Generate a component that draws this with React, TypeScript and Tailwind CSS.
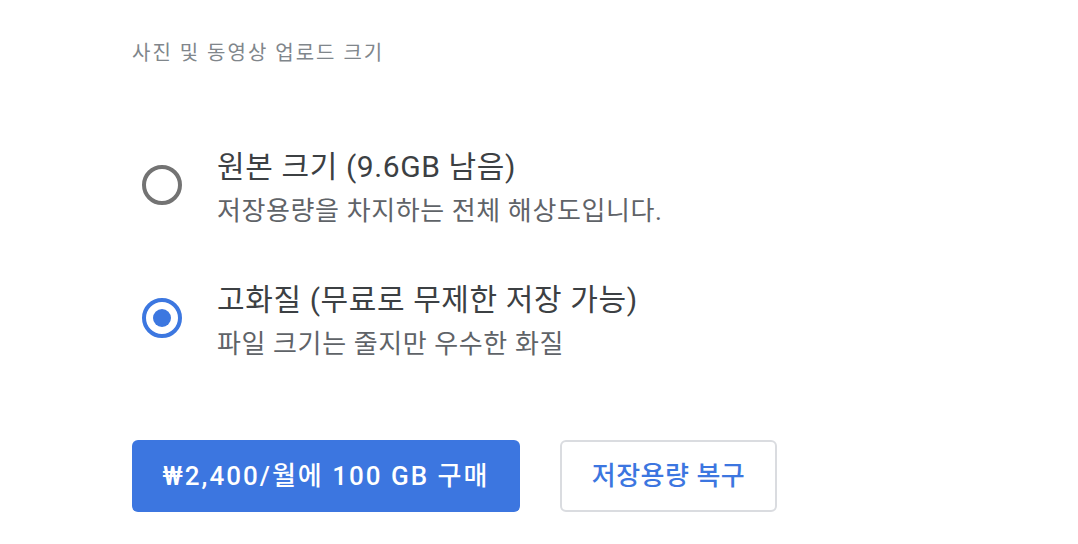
const FONT = "font-['Roboto','Noto_Sans_CJK_KR',sans-serif]"

interface OptionProps {
  title: string
  desc: string
  checked: boolean
}

function Radio({ checked }: { checked: boolean }) {
  return checked ? (
    <div className="w-[40px] h-[40px] rounded-full border-[4px] border-[#3c77e0] flex items-center justify-center">
      <div className="w-[18px] h-[18px] rounded-full bg-[#3c77e0]" />
    </div>
  ) : (
    <div className="w-[40px] h-[40px] rounded-full border-[4px] border-[#737373]" />
  )
}

function Option({ title, desc, checked }: OptionProps) {
  return (
    <div className="flex items-start">
      <div className="w-[85px] pl-[10px] pt-[18px]">
        <Radio checked={checked} />
      </div>
      <div className="flex flex-col">
        <span className="text-[30px] leading-[40px] tracking-[0.6px] text-[#3c4043]">{title}</span>
        <span className="text-[26px] leading-[36px] tracking-[0.6px] text-[#5f6368] mt-[6px]">{desc}</span>
      </div>
    </div>
  )
}

export default function App() {
  return (
    <div className={`${FONT} w-[1078px] h-[544px] bg-white pl-[132px] pt-[39px]`}>
      {/* Section header */}
      <div className="text-[20px] leading-[28px] tracking-[2px] text-[#80868b]">
        사진 및 동영상 업로드 크기
      </div>

      {/* Options */}
      <div className="mt-[80px] flex flex-col gap-[51px]">
        <Option title="원본 크기 (9.6GB 남음)" desc="저장용량을 차지하는 전체 해상도입니다." checked={false} />
        <Option title="고화질 (무료로 무제한 저장 가능)" desc="파일 크기는 줄지만 우수한 화질" checked={true} />
      </div>

      {/* Actions */}
      <div className="mt-[78px] flex items-center gap-[40px]">
        <button className="w-[388px] h-[72px] rounded-[6px] bg-[#3c76e0] text-white text-[26px] tracking-[2px] font-medium">
          ₩2,400/월에 100 GB 구매
        </button>
        <button className="w-[217px] h-[72px] rounded-[6px] border-2 border-[#dadce0] bg-white text-[#3c76e0] text-[26px] tracking-[0.5px] font-medium">
          저장용량 복구
        </button>
      </div>
    </div>
  )
}
